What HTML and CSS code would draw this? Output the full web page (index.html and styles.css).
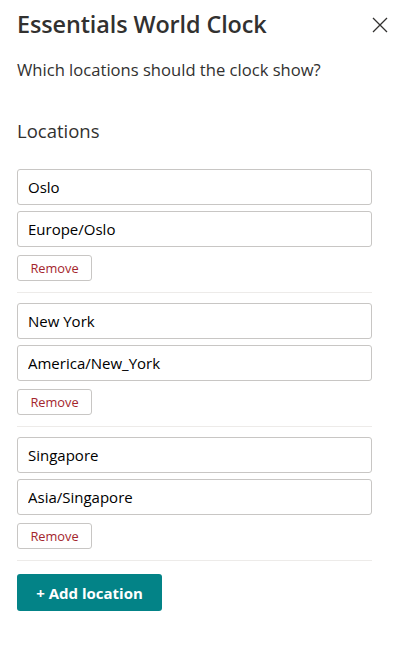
FILE: index.html
```html
<!DOCTYPE html>
<html>
<head>
<meta charset="utf-8">
<link rel="stylesheet" href="styles.css">
</head>
<body>
<div class="panel">
  <div class="header">
    <h1 class="title">Essentials World Clock</h1>
    <button class="close" aria-label="Close">
      <svg width="16" height="16" viewBox="0 0 16 16"><path d="M1 1 L15 15 M15 1 L1 15" stroke="#323130" stroke-width="1.3" fill="none"/></svg>
    </button>
  </div>
  <p class="desc">Which locations should the clock show?</p>
  <h2 class="section">Locations</h2>

  <div class="locations">
    <div class="group">
      <input class="field" value="Oslo">
      <input class="field" value="Europe/Oslo">
      <button class="remove">Remove</button>
    </div>
    <div class="group">
      <input class="field" value="New York">
      <input class="field" value="America/New_York">
      <button class="remove">Remove</button>
    </div>
    <div class="group">
      <input class="field" value="Singapore">
      <input class="field" value="Asia/Singapore">
      <button class="remove">Remove</button>
    </div>
  </div>

  <button class="add">+ Add location</button>
</div>
</body>
</html>
```
FILE: styles.css
```css
* { box-sizing: border-box; }
body {
  margin: 0;
  background: #fff;
  font-family: "Open Sans", "Noto Sans", sans-serif;
  color: #323130;
}
.panel {
  padding: 0 25px 0 17px;
}
.header {
  display: flex;
  justify-content: space-between;
  align-items: flex-start;
  padding-top: 7px;
}
.title {
  margin: 0;
  font-size: 23.4px;
  font-weight: 600;
  line-height: 34px;
  color: #323130;
  letter-spacing: -0.1px;
}
.close {
  border: 0;
  background: none;
  padding: 0;
  margin: 10px -16px 0 0;
  width: 16px;
  height: 16px;
  display: flex;
}
.desc {
  margin: 18px 0 0;
  font-size: 16.6px;
  line-height: 22px;
  color: #323130;
}
.section {
  margin: 37px 0 0;
  font-size: 18.5px;
  font-weight: 400;
  line-height: 26px;
  color: #323130;
}
.locations {
  margin-top: 25px;
}
.group {
  display: flex;
  flex-direction: column;
  align-items: flex-start;
  gap: 6px;
  padding: 10px 0 11px;
  border-bottom: 1px solid #edebe9;
}
.group:first-child { padding-top: 0; }
.field {
  width: 100%;
  height: 36px;
  border: 1px solid #c8c6c4;
  border-radius: 3px;
  padding: 0 10px;
  font-family: inherit;
  font-size: 15px;
  color: #000;
  background: #fff;
}
.remove {
  margin-top: 2px;
  width: 75px;
  height: 26px;
  border: 1px solid #c8c6c4;
  border-radius: 3px;
  background: #fff;
  color: #a4262c;
  font-family: inherit;
  font-size: 12.8px;
  padding: 0;
}
.add {
  margin-top: 13px;
  width: 145px;
  height: 37px;
  border: 0;
  border-radius: 3px;
  background: #038387;
  color: #fff;
  font-family: inherit;
  font-size: 15px;
  font-weight: 700;
  padding: 0;
}
```
